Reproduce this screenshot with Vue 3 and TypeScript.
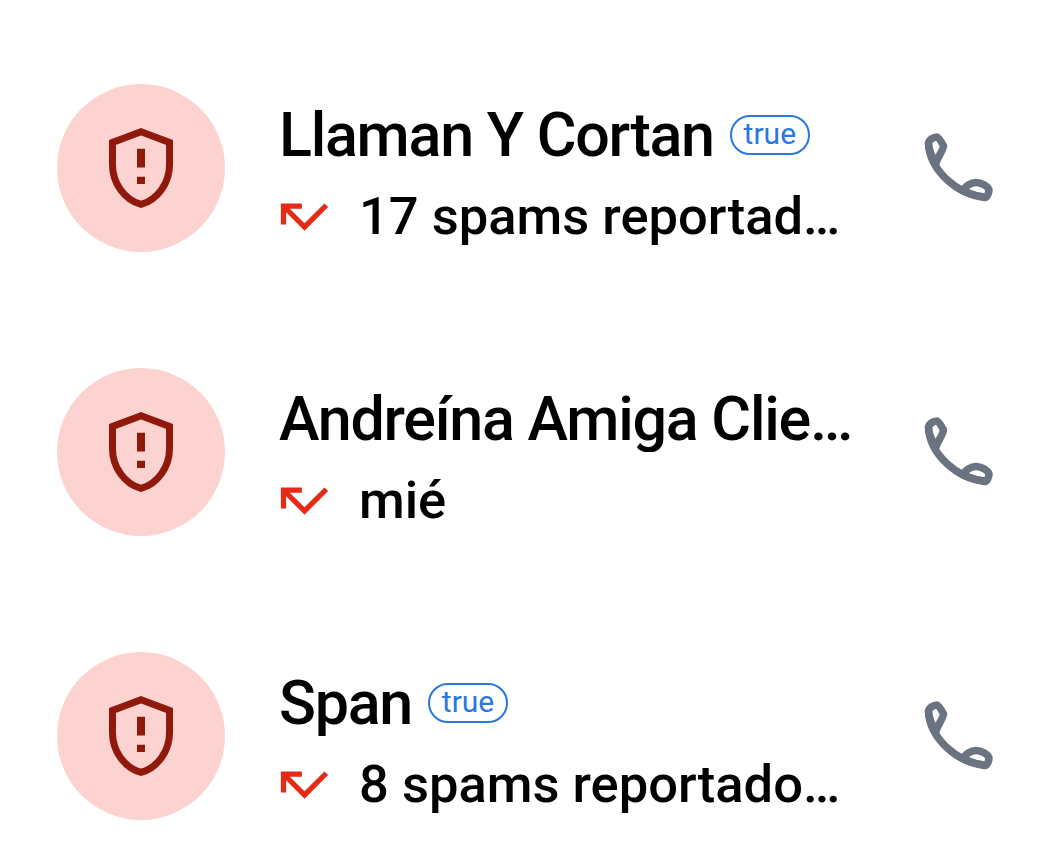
<script setup lang="ts">
interface Row { name: string; badge: boolean; sub: string }
const rows: Row[] = [
  { name: 'Llaman Y Cortan', badge: true, sub: '17 spams reportados por usuarios' },
  { name: 'Andreína Amiga Cliente', badge: false, sub: 'mié' },
  { name: 'Span', badge: true, sub: '8 spams reportados por usuarios' },
]
</script>

<template>
  <div class="list">
    <div v-for="r in rows" :key="r.name" class="row">
      <div class="avatar">
        <svg class="shield" viewBox="0 0 24 24">
          <path d="M12 2.95L4.87 5.6v5.5c0 4.65 3.01 8.9 7.13 10 4.12-1.1 7.13-5.35 7.13-10V5.6z" fill="none" stroke="#8f1a0c" stroke-width="1.75" />
          <path d="M11 7.2h2v4.7h-2zM11 14.2h2v1.8h-2z" fill="#8f1a0c" />
        </svg>
      </div>
      <div class="body">
        <div class="title">
          <span class="name">{{ r.name }}</span>
          <span v-if="r.badge" class="badge">true</span>
        </div>
        <div class="sub">
          <svg class="missed" viewBox="0 0 24 24" fill="#e52a16">
            <path d="M19.59 7L12 14.59 6.41 9H11V7H3v8h2v-4.59l7 7 9-9z" />
          </svg>
          <span class="subtext">{{ r.sub }}</span>
        </div>
      </div>
      <svg class="phone" viewBox="0 0 72 72" fill="none" stroke="#6b7280" stroke-width="7.5" stroke-linejoin="round" stroke-linecap="round">
        <path d="M5.5 11C6 8 10 5 14 5C16 6 19 11 20.5 14C20 19 15 24 13 31C9 25 5.5 18 5.5 11Z" />
        <path d="M5.5 12C7 38 34 63 62 65" />
        <path d="M40 59C42 54 48 50.5 53 50.5C58 50.5 65 54 66 58C66 61 64 65.5 62 65.5C55 64.5 47 62 40 59Z" />
      </svg>
    </div>
  </div>
</template>

<style>
html, body { background: #fff; }
</style>

<style scoped>
.list {
  width: 1062px;
  height: 865px;
  box-sizing: border-box;
  padding: 84px 0 0 57px;
  display: flex;
  flex-direction: column;
  gap: 116px;
  font-family: Roboto, "Liberation Sans", sans-serif;
  color: #000;
}
.row { display: flex; align-items: center; height: 168px; }
.avatar {
  flex: none;
  width: 168px;
  height: 168px;
  border-radius: 50%;
  background: #fcd3d0;
  display: flex;
  align-items: center;
  justify-content: center;
}
.shield { width: 96px; height: 96px; }
.body {
  flex: none;
  width: 576px;
  margin-left: 54px;
  padding-top: 17px;
  display: flex;
  flex-direction: column;
}
.title { display: flex; align-items: center; height: 66px; margin-top: -4px; }
.name { font-size: 61px; font-weight: 500; letter-spacing: -1.25px; line-height: 66px; white-space: nowrap; overflow: hidden; text-overflow: ellipsis; }
.badge {
  flex: none;
  margin-left: 16px;
  width: 80px;
  height: 40px;
  box-sizing: border-box;
  border: 2.5px solid #2b77e0;
  border-radius: 20px;
  color: #2b77e0;
  font-size: 30px;
  line-height: 33px;
  text-align: center;
}
.sub { display: flex; align-items: center; height: 62px; margin-top: 17px; }
.missed { flex: none; width: 63px; height: 63px; margin-left: -6px; }
.subtext { font-size: 52.5px; font-weight: 500; margin-left: 23px; width: 486px; white-space: nowrap; overflow: hidden; text-overflow: ellipsis; }
.phone { flex: none; width: 72px; height: 72px; margin-left: 68px; }
</style>
